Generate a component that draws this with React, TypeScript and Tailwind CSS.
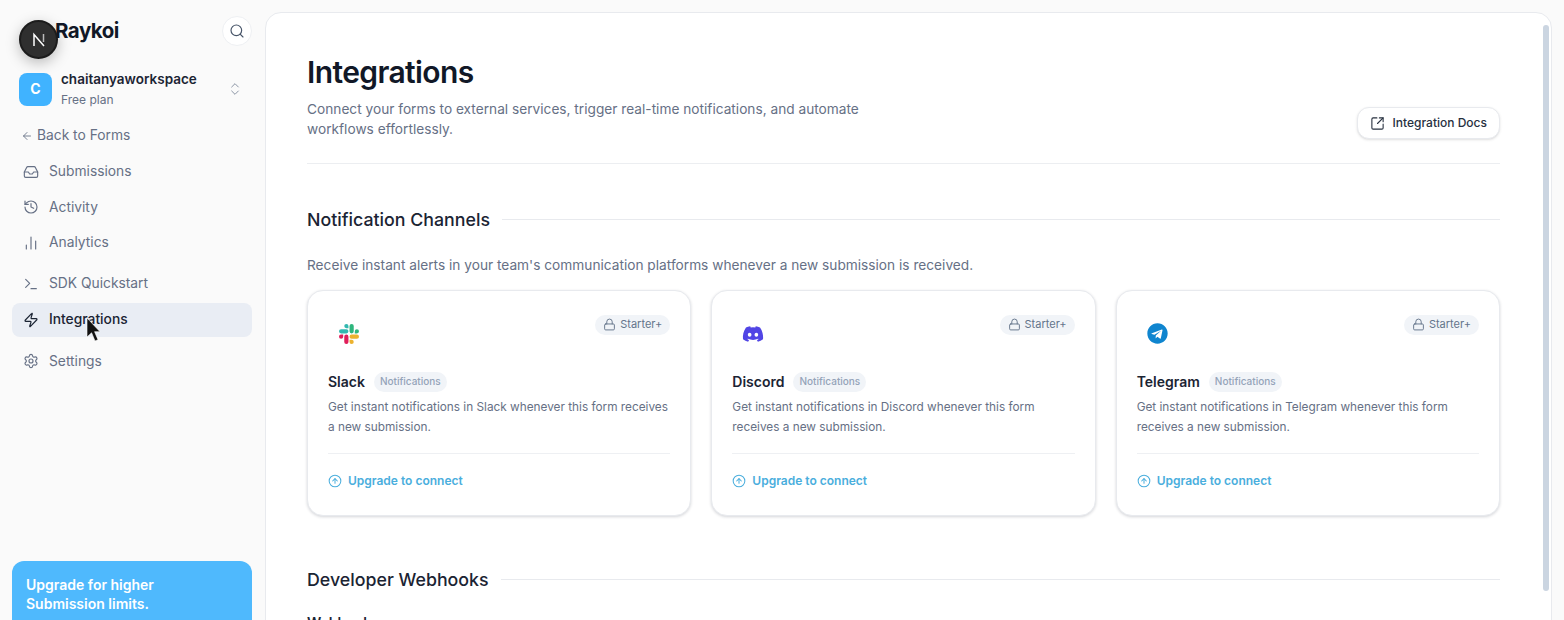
import {
  ArrowLeft,
  ChartNoAxesColumn,
  ChevronsUpDown,
  CircleArrowUp,
  History,
  Inbox,
  Lock,
  Search,
  Settings,
  SquareArrowOutUpRight,
  Terminal,
  Zap,
} from 'lucide-react';
import { FaDiscord, FaTelegram } from 'react-icons/fa';

function SlackLogo() {
  return (
    <svg viewBox="0 0 24 24" className="h-5 w-5">
      <path fill="#E01E5A" d="M5.042 15.165a2.528 2.528 0 0 1-2.52 2.523A2.528 2.528 0 0 1 0 15.165a2.527 2.527 0 0 1 2.522-2.52h2.52v2.52zM6.313 15.165a2.527 2.527 0 0 1 2.521-2.52 2.527 2.527 0 0 1 2.521 2.52v6.313A2.528 2.528 0 0 1 8.834 24a2.528 2.528 0 0 1-2.521-2.522v-6.313z" />
      <path fill="#33B8B0" d="M8.834 5.042a2.528 2.528 0 0 1-2.521-2.52A2.528 2.528 0 0 1 8.834 0a2.528 2.528 0 0 1 2.521 2.522v2.52H8.834zM8.834 6.313a2.528 2.528 0 0 1 2.521 2.521 2.528 2.528 0 0 1-2.521 2.521H2.522A2.528 2.528 0 0 1 0 8.834a2.528 2.528 0 0 1 2.522-2.521h6.312z" />
      <path fill="#2EB67D" d="M18.956 8.834a2.528 2.528 0 0 1 2.522-2.521A2.528 2.528 0 0 1 24 8.834a2.528 2.528 0 0 1-2.522 2.521h-2.522V8.834zM17.688 8.834a2.528 2.528 0 0 1-2.523 2.521 2.527 2.527 0 0 1-2.52-2.521V2.522A2.527 2.527 0 0 1 15.165 0a2.528 2.528 0 0 1 2.523 2.522v6.312z" />
      <path fill="#ECB22E" d="M15.165 18.956a2.528 2.528 0 0 1 2.523 2.522A2.528 2.528 0 0 1 15.165 24a2.527 2.527 0 0 1-2.52-2.522v-2.522h2.52zM15.165 17.688a2.527 2.527 0 0 1-2.52-2.523 2.526 2.526 0 0 1 2.52-2.52h6.313A2.527 2.527 0 0 1 24 15.165a2.528 2.528 0 0 1-2.522 2.523h-6.313z" />
    </svg>
  );
}

const cards = [
  { name: 'Slack', logo: <SlackLogo /> },
  { name: 'Discord', logo: <FaDiscord className="h-[22px] w-[22px] text-[#5145e5]" /> },
  { name: 'Telegram', logo: <FaTelegram className="h-[21px] w-[21px] text-[#0f85cf]" /> },
];

function NavItem({ icon, label, active, className }: { icon: React.ReactNode; label: string; active?: boolean; className?: string }) {
  return (
    <div className={`flex h-[34px] items-center gap-[10px] rounded-lg px-[11px] text-[13.8px] ${active ? 'bg-[#e9edf4] font-medium text-[#1b2433]' : 'text-[#667085]'} ${className ?? ''}`}>
      {icon}
      {label}
    </div>
  );
}

function IntegrationCard({ name, logo }: { name: string; logo: React.ReactNode }) {
  return (
    <div className="flex h-[226px] flex-col rounded-2xl border border-[#e8eaee] bg-white px-5 pt-5 shadow-[0_1px_3px_rgba(15,23,42,0.18)]">
      <div className="flex items-start justify-between">
        <div className="flex h-[46px] w-[41px] items-center justify-center">{logo}</div>
        <span className="mt-1 flex h-5 items-center gap-1 rounded-full bg-[#f1f4f8] px-2 text-[11px] text-[#64748b]">
          <Lock className="h-[13px] w-[13px]" strokeWidth={1.75} />
          Starter+
        </span>
      </div>
      <div className="mt-[15px] flex h-5 items-center gap-[9px]">
        <span className="text-sm font-semibold text-[#1b2433]">{name}</span>
        <span className="flex h-5 items-center rounded-full bg-[#f1f4f8] px-[6px] text-[10px] font-medium text-[#94a3b8]">Notifications</span>
      </div>
      <p className="mt-[5px] text-[11.8px] leading-5 text-[#667085]">
        Get instant notifications in {name} whenever this form receives a new submission.
      </p>
      <div className="mt-4 border-t border-[#eef0f3]" />
      <div className="mt-[19px] flex items-center gap-[6px] text-xs font-semibold text-[#4aaedd]">
        <CircleArrowUp className="h-[14px] w-[14px]" strokeWidth={1.75} />
        Upgrade to connect
      </div>
    </div>
  );
}

function SectionTitle({ children }: { children: string }) {
  return (
    <div className="flex items-center gap-3">
      <h2 className="pt-px text-[17.8px] font-medium text-[#1b2433]">{children}</h2>
      <div className="h-px flex-1 bg-[#e8eaee]" />
    </div>
  );
}

export default function App() {
  const iconCls = 'h-4 w-4 shrink-0';
  return (
    <div className="relative flex h-[620px] overflow-hidden bg-[#fafafa] font-['Inter',sans-serif]">
      <aside className="flex w-[265px] shrink-0 flex-col pl-3 pr-[13px] pt-4">
        <div className="flex h-8 items-center justify-between">
          <span className="pl-[43px] text-[20.5px] font-bold tracking-tight text-[#111827]">Raykoi</span>
          <div className="flex h-[30px] w-[30px] items-center justify-center rounded-full border border-[#eef0f3] bg-white text-[#475569]">
            <Search className="h-4 w-4" strokeWidth={1.75} />
          </div>
        </div>
        <div className="mt-[22px] flex items-center px-[7px]">
          <div className="flex h-[33px] w-[33px] items-center justify-center rounded-lg bg-[#40b3ff] text-sm font-bold text-white">C</div>
          <div className="ml-[9px] flex-1">
            <div className="text-[13.5px] font-semibold leading-5 text-[#1b2433]">chaitanyaworkspace</div>
            <div className="mt-px text-xs leading-5 text-[#667085]">Free plan</div>
          </div>
          <ChevronsUpDown className="mr-[2px] h-4 w-4 text-[#8b95a5]" strokeWidth={1.5} />
        </div>
        <div className="mt-4 flex h-5 items-center gap-1 px-[9px] text-[13.8px] text-[#667085]">
          <ArrowLeft className="h-3 w-3" strokeWidth={1.75} />
          Back to Forms
        </div>
        <div className="mt-[9px] flex flex-col gap-[1.5px]">
          <NavItem icon={<Inbox className={iconCls} strokeWidth={1.75} />} label="Submissions" />
          <NavItem icon={<History className={iconCls} strokeWidth={1.75} />} label="Activity" />
          <NavItem icon={<ChartNoAxesColumn className={iconCls} strokeWidth={1.75} />} label="Analytics" />
        </div>
        <div className="mt-[7px] flex flex-col gap-[2px]">
          <NavItem icon={<Terminal className={iconCls} strokeWidth={1.75} />} label="SDK Quickstart" />
          <NavItem active icon={<Zap className={iconCls} strokeWidth={1.75} />} label="Integrations" />
        </div>
        <NavItem className="mt-[14px]" icon={<Settings className={iconCls} strokeWidth={1.75} />} label="Settings" />
        <div className="mt-[190px] h-[120px] shrink-0 rounded-xl bg-[#4fb9fd] px-[14px] pt-[14px] text-sm font-semibold leading-[19px] text-white">
          Upgrade for higher
          <br />
          Submission limits.
        </div>
      </aside>

      <main className="mt-3 mr-3 h-[700px] flex-1 rounded-t-2xl border border-[#e8eaee] bg-white pl-[41px] pr-[51px] pt-[39px]">
        <div className="flex items-end justify-between border-b border-[#eceef1] pb-6">
          <div>
            <h1 className="text-3xl leading-10 font-semibold tracking-[-0.6px] text-[#111827]">Integrations</h1>
            <p className="mt-[7px] w-[580px] text-[13.7px] leading-5 text-[#667085]">
              Connect your forms to external services, trigger real-time notifications, and automate workflows effortlessly.
            </p>
          </div>
          <div className="flex h-8 items-center gap-2 rounded-xl border border-[#e8eaee] bg-white px-3 text-xs font-medium text-[#27303f] shadow-sm">
            <SquareArrowOutUpRight className="h-[15px] w-[15px]" strokeWidth={1.75} />
            Integration Docs
          </div>
        </div>

        <div className="mt-[42px]">
          <SectionTitle>Notification Channels</SectionTitle>
        </div>
        <p className="mt-[21px] text-[13.7px] leading-5 text-[#667085]">
          Receive instant alerts in your team's communication platforms whenever a new submission is received.
        </p>
        <div className="mt-[15px] grid grid-cols-3 gap-5">
          {cards.map(c => (
            <IntegrationCard key={c.name} name={c.name} logo={c.logo} />
          ))}
        </div>

        <div className="mt-[50px]">
          <SectionTitle>Developer Webhooks</SectionTitle>
        </div>
        <div className="mt-[20px] text-sm font-semibold text-[#1b2433]">Webhooks</div>
      </main>

      {/* scrollbar */}
      <div className="absolute right-[15px] top-[25px] h-[566px] w-[6px] rounded-full bg-[#cbd5e1]" />

      {/* dev indicator */}
      <div className="absolute left-[19px] top-5 flex h-[39px] w-[39px] items-center justify-center rounded-full border-2 border-[#1c1c1c] bg-[#2f2f2f] shadow-[0_4px_14px_rgba(0,0,0,0.25)]">
        <svg viewBox="0 0 16 16" className="h-4 w-4" fill="none" stroke="#fff" strokeWidth="1.5">
          <path d="M3 14V2.5L13 14" />
          <path d="M12.5 2v8" stroke="#bbb" />
        </svg>
      </div>

      {/* cursor */}
      <svg viewBox="0 0 16 24" className="absolute left-[86px] top-[318px] h-6 w-4">
        <path d="M1 0v19l4.6-4.2L9 23l3-1.3-3.4-8H14z" fill="#111" stroke="#fff" strokeWidth="0.6" />
      </svg>
    </div>
  );
}
